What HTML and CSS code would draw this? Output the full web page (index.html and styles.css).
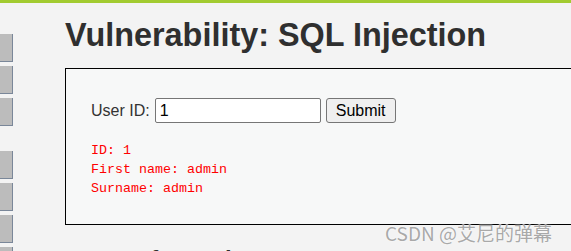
FILE: index.html
```html
<!DOCTYPE html>
<html lang="en">
<head>
    <meta charset="UTF-8">
    <meta name="viewport" content="width=device-width, initial-scale=1.0">
    <title>Vulnerability: SQL Injection</title>
    <link rel="stylesheet" href="styles.css">
</head>
<body>

    <div class="pagina">
        <!-- Menu lateral (só a borda aparece) -->
        <div class="menu">
            <div class="grupo">
                <a class="botao" href="#"></a>
                <a class="botao" href="#"></a>
                <a class="botao" href="#"></a>
            </div>
            <div class="grupo">
                <a class="botao" href="#"></a>
                <a class="botao" href="#"></a>
                <a class="botao" href="#"></a>
                <a class="botao" href="#"></a>
            </div>
        </div>

        <!-- Corpo principal -->
        <div class="corpo">
            <h1>Vulnerability: SQL Injection</h1>

            <div class="vulneravel">
                <form class="formulario" action="#" method="GET">
                    <label for="id">User ID:</label>
                    <input type="text" id="id" name="id" value="1">
                    <input type="submit" name="Submit" value="Submit">
                </form>
                <pre class="resultado">ID: 1
First name: admin
Surname: admin</pre>
            </div>

            <h2>More Information</h2>
        </div>
    </div>

    <div class="marca">CSDN @艾尼的弹幕</div>

</body>
</html>
```

FILE: styles.css
```css
html {
    overflow: hidden;
}
body {
    margin: 0;
    padding: 0;
    background-color: #f3f3f3;
    border-top: 3px solid #a2cb30;
    font-family: "Liberation Sans", Arial, sans-serif;
    color: #2f2f2f;
}
.pagina {
    display: flex;
}
.menu {
    width: 13px;
    flex-shrink: 0;
    padding-top: 31px;
    display: flex;
    flex-direction: column;
    gap: 25px;
}
.grupo {
    display: flex;
    flex-direction: column;
    gap: 4px;
}
.botao {
    display: block;
    height: 27px;
    background-color: #bcbcbc;
    border-right: 1px solid #7a8799;
    border-bottom: 1px solid #7a8799;
}
.corpo {
    margin-left: 52px;
    width: 600px;
    flex-shrink: 0;
}
h1 {
    margin: 14px 0 14px 0;
    font-size: 32.4px;
    line-height: 37px;
    font-weight: bold;
    color: #2f2f2f;
}
.vulneravel {
    border: 1px solid #000;
    background-color: #f7f8f8;
    padding: 29px 0 26px 25px;
}
.formulario {
    display: flex;
    align-items: baseline;
    gap: 5px;
    font-size: 16px;
}
.formulario label {
    color: #333;
}
.formulario input {
    font-family: "Liberation Sans", Arial, sans-serif;
    font-size: 16px;
    height: 25px;
    box-sizing: border-box;
    border: 1px solid #767676;
    color: #000;
}
.formulario input[type="text"] {
    width: 166px;
    padding: 1px 4px;
    border-radius: 2px;
    background-color: #fff;
}
.formulario input[type="submit"] {
    width: 70px;
    padding: 1px 0;
    border-radius: 3px;
    background-color: #efefef;
}
.resultado {
    margin: 18px 0 0 0;
    font-family: "Liberation Mono", "Courier New", monospace;
    font-size: 13.33px;
    line-height: 19px;
    color: #ff0000;
}
h2 {
    margin: 21px 0 0 0;
    font-size: 24px;
    line-height: 28px;
    color: #2f2f2f;
}
.marca {
    position: absolute;
    left: 385px;
    top: 219px;
    font-family: "Noto Sans CJK SC", sans-serif;
    font-size: 19px;
    color: #a9a9a9;
    text-shadow: 0 0 2px #fff, 0 0 1px #fff;
    white-space: nowrap;
}
```
